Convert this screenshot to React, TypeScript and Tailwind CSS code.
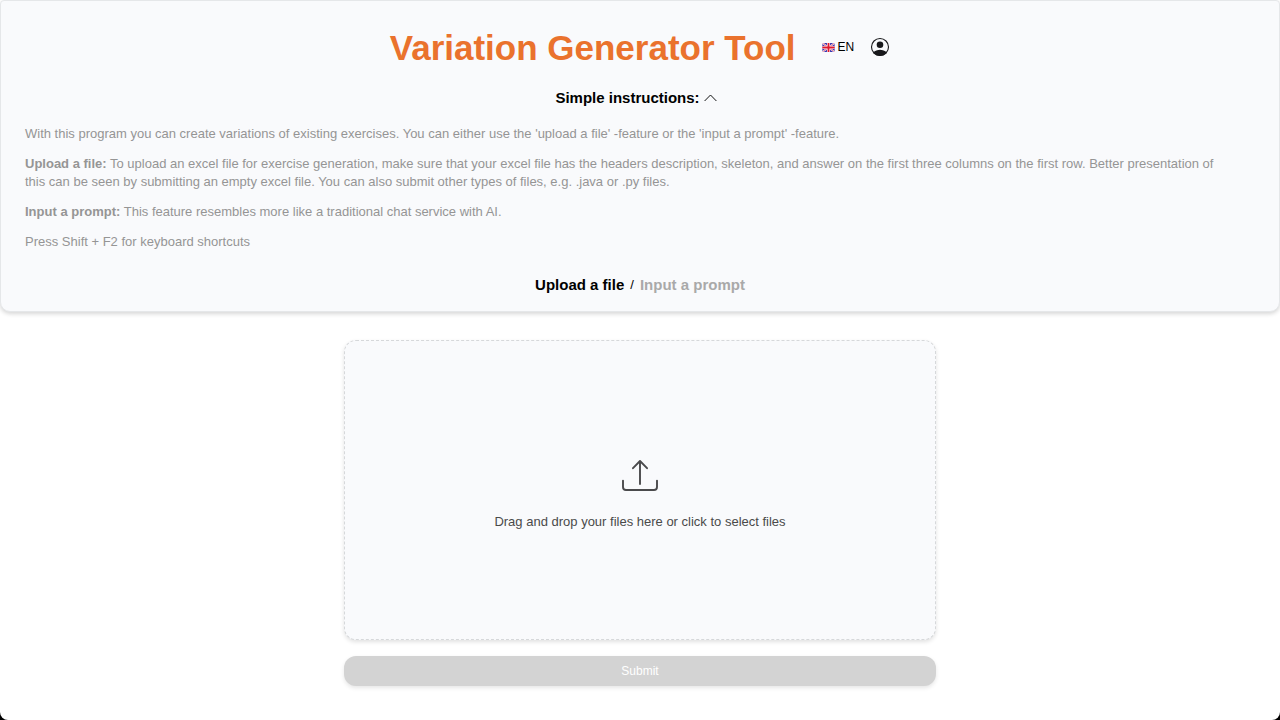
import { useState } from "react";

function FlagIcon() {
  return (
    <svg viewBox="0 0 60 44" className="h-[9px] w-[13px]" aria-hidden="true">
      <rect width="60" height="44" rx="4" fill="#3a35b0" />
      <path d="M0 0L60 44M60 0L0 44" stroke="#fff" strokeWidth="8" />
      <path d="M0 0L60 44M60 0L0 44" stroke="#d8284a" strokeWidth="3" />
      <path d="M30 0V44M0 22H60" stroke="#fff" strokeWidth="15" />
      <path d="M30 0V44M0 22H60" stroke="#e0182f" strokeWidth="9" />
    </svg>
  );
}

function AccountIcon() {
  return (
    <svg viewBox="0 0 20 20" className="size-5" aria-hidden="true">
      <defs>
        <clipPath id="account-disc">
          <circle cx="10" cy="10" r="9" />
        </clipPath>
      </defs>
      <g clipPath="url(#account-disc)" fill="#18181b">
        <circle cx="10" cy="7.7" r="3.3" />
        <ellipse cx="10" cy="18" rx="7.6" ry="5.2" />
      </g>
      <circle cx="10" cy="10" r="8.5" fill="none" stroke="#18181b" strokeWidth="1.1" />
    </svg>
  );
}

function ChevronUpIcon() {
  return (
    <svg viewBox="0 0 13 8" className="h-2 w-[13px]" fill="none" stroke="#111" strokeWidth="1" aria-hidden="true">
      <path d="M0.6 7L6.5 1L12.4 7" />
    </svg>
  );
}

function UploadIcon() {
  return (
    <svg
      viewBox="0 0 36 32"
      className="h-8 w-9"
      fill="none"
      stroke="#4a4a4c"
      strokeWidth="1.9"
      strokeLinecap="round"
      strokeLinejoin="round"
      aria-hidden="true"
    >
      <path d="M18 24V1.2M11 8.2L18 1L25 8.2" />
      <path d="M1 20.6V27Q1 30 4 30H32Q35 30 35 27V20.6" />
    </svg>
  );
}

export default function App() {
  const [open, setOpen] = useState(true);
  const [mode, setMode] = useState<"file" | "prompt">("file");
  const active = "font-bold text-black";
  const inactive = "font-bold text-[#a9a9a9]";

  return (
    <div className="bg-black font-['Liberation_Sans',Arial,sans-serif] text-black">
      <div className="min-h-screen rounded-b-[8px] bg-white">
        <header className="rounded-t-[4px] rounded-b-[10px] border border-[#e5e7e9] bg-[#f9fafc] px-6 pt-[25px] pb-4 shadow-[0_2px_4px_rgba(0,0,0,0.16)]">
          <div className="flex items-center justify-center">
            <h1 className="text-[35px] leading-[44px] font-bold text-[#ea722d]">Variation Generator Tool</h1>
            <div className="ml-[26px] flex items-center gap-4 pb-[2px]">
              <button type="button" className="flex items-center gap-[3px] text-xs">
                <FlagIcon />
                EN
              </button>
              <button type="button" aria-label="Account">
                <AccountIcon />
              </button>
            </div>
          </div>

          <div className="mt-[18px] flex justify-center">
            <button
              type="button"
              aria-expanded={open}
              onClick={() => setOpen(!open)}
              className="flex items-center gap-1 pr-2 text-[15px] leading-5 font-bold"
            >
              Simple instructions:
              <ChevronUpIcon />
            </button>
          </div>

          {open && (
            <div className="mt-[17px] space-y-3 pr-6 text-[13px] leading-[18px] text-[#959595]">
              <p>
                With this program you can create variations of existing exercises. You can either use the 'upload a
                file' -feature or the 'input a prompt' -feature.
              </p>
              <p>
                <b>Upload a file:</b> To upload an excel file for exercise generation, make sure that your excel file
                has the headers description, skeleton, and answer on the first three columns on the first row. Better
                presentation of this can be seen by submitting an empty excel file. You can also submit other types of
                files, e.g. .java or .py files.
              </p>
              <p>
                <b>Input a prompt:</b> This feature resembles more like a traditional chat service with AI.
              </p>
              <p>Press Shift + F2 for keyboard shortcuts</p>
            </div>
          )}

          <div className="mt-6 flex items-center justify-center gap-[6px] text-[15px] leading-5">
            <button type="button" onClick={() => setMode("file")} className={mode === "file" ? active : inactive}>
              Upload a file
            </button>
            <span className="text-[13px]">/</span>
            <button type="button" onClick={() => setMode("prompt")} className={mode === "prompt" ? active : inactive}>
              Input a prompt
            </button>
          </div>
        </header>

        <main className="mx-auto mt-7 w-full max-w-[592px]">
          <button
            type="button"
            className="flex min-h-[300px] w-full flex-col items-center justify-center gap-5 rounded-[12px] border border-dashed border-[#d6d8da] bg-[#f9fafc] pt-3 text-[13px] leading-5 text-[#4a4a4a] shadow-[0_2px_4px_rgba(0,0,0,0.12)]"
          >
            <UploadIcon />
            Drag and drop your files here or click to select files
          </button>
          <button
            type="button"
            className="mt-4 w-full rounded-[12px] bg-[#d3d3d3] py-[5px] text-[12px] leading-5 text-white shadow-[0_2px_4px_rgba(0,0,0,0.1)]"
          >
            Submit
          </button>
        </main>
      </div>
    </div>
  );
}
